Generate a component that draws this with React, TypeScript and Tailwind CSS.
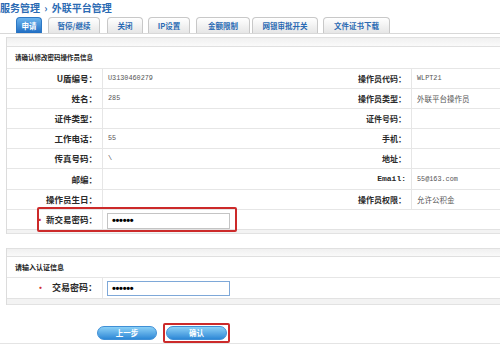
const tabs = [
  { label: '申请', cls: 'ml-[16px] w-[26px]', active: true },
  { label: '暂停/继续', cls: 'ml-[6px] w-[52px]' },
  { label: '关闭', cls: 'ml-[7px] w-[36px]' },
  { label: 'IP设置', cls: 'ml-[5px] w-[42px]' },
  { label: '金额限制', cls: 'ml-[6px] w-[54px]' },
  { label: '网银审批开关', cls: 'ml-[2px] w-[66px]' },
  { label: '文件证书下载', cls: 'ml-[5px] w-[67px]' },
];

const rows = [
  { l1: 'U盾编号：', v1: 'U3130460279', l2: '操作员代码：', v2: 'WLPT21' },
  { l1: '姓名：', v1: '285', l2: '操作员类型：', v2: '外联平台操作员', cjk2: true },
  { l1: '证件类型：', v1: '', l2: '证件号码：', v2: '' },
  { l1: '工作电话：', v1: '55', l2: '手机：', v2: '' },
  { l1: '传真号码：', v1: '\\', l2: '地址：', v2: '' },
  { l1: '邮编：', v1: '', l2: 'Email:', v2: '55@163.com', mono2: true },
  { l1: '操作员生日：', v1: '', l2: '操作员权限：', v2: '允许公积金', cjk2: true },
];

const cjk = { fontFamily: '"Noto Sans CJK SC", "Liberation Sans", sans-serif' };
const mono = { fontFamily: '"Liberation Mono", "Noto Sans CJK SC", monospace' };

function Label({ text, mono: m, big }: { text: string; mono?: boolean; big?: boolean }) {
  return (
    <div
      className={`h-full flex items-center justify-end pr-[5px] font-bold text-[#2a2a2a] whitespace-nowrap ${big ? 'text-[8.5px]' : 'text-[8px]'}`}
      style={m ? mono : cjk}
    >
      {text}
    </div>
  );
}

function Value({ text, cjkText }: { text: string; cjkText?: boolean }) {
  return (
    <div
      className={`h-full flex items-center pl-[5px] text-[#555] ${cjkText ? 'text-[7.5px]' : 'text-[6.8px]'}`}
      style={cjkText ? cjk : mono}
    >
      {text}
    </div>
  );
}

function Dots() {
  return <span className="text-[11px] font-bold text-black tracking-[-0.3px] leading-none" style={{ fontFamily: '"Liberation Sans", sans-serif' }}>••••••</span>;
}

export default function App() {
  return (
    <div className="relative w-[500px] h-[347px] overflow-hidden bg-white" style={cjk}>
      {/* breadcrumb */}
      <div className="h-[16px] pt-[2px] text-[10px] leading-[12px] font-bold text-[#2a6ab3] whitespace-nowrap">
        服务管理 <span className="mx-[2px]">›</span> 外联平台管理
      </div>

      {/* tabs */}
      <div className="flex items-end h-[17px] mt-[1px] border-b border-[#d8d8d8]">
        {tabs.map(t => (
          <div
            key={t.label}
            className={`${t.cls} h-[16px] flex items-center justify-center rounded-t-[4px] border border-b-0 text-[7.5px] font-bold whitespace-nowrap ${
              t.active
                ? 'border-[#2d78c4] bg-gradient-to-b from-[#6ab4ee] to-[#1f6dc2] text-white'
                : 'border-[#c8c8c8] bg-gradient-to-b from-white to-[#e6e6e6] text-[#2a6ab3]'
            }`}
          >
            {t.label}
          </div>
        ))}
      </div>

      {/* box 1 */}
      <div className="ml-[6px] mt-[3px] border-l border-[#dcdcdc]">
        <div className="h-[10px] border-y border-[#e0e0e0] bg-gradient-to-b from-[#f0f0f0] to-[#fafafa]" />
        <div className="h-[21px] flex items-center pl-[8px] text-[6.5px] font-bold text-[#222]">请确认修改密码操作员信息</div>
        {rows.map((r, i) => (
          <div key={i} className={`grid grid-cols-[96px_210px_99px_1fr] border-t border-[#e6e6e6] ${i === 5 ? 'h-[21px]' : 'h-[20px]'}`}>
            <div className="border-r border-[#e6e6e6]"><Label text={r.l1} big /></div>
            <Value text={r.v1} />
            <div className="border-r border-[#e6e6e6]"><Label text={r.l2} mono={r.mono2} /></div>
            <Value text={r.v2} cjkText={r.cjk2} />
          </div>
        ))}
        <div className="relative grid grid-cols-[96px_1fr] h-[20px] border-t border-[#e6e6e6]">
          <div className="border-r border-[#e6e6e6] h-full flex items-center justify-end pr-[5px] text-[8.5px] font-bold text-[#2a2a2a]">
            <span className="text-[#d03030] mr-[2px]">•</span>新交易密码：
          </div>
          <div className="flex items-center pl-[4px]">
            <div className="w-[123px] h-[16px] mt-[2px] border border-[#c4c4c4] bg-white flex items-center pl-[4px]">
              <Dots />
            </div>
          </div>
          <div className="absolute left-[30px] top-[-3px] w-[200px] h-[25px] border-2 border-[#cc2a2a] rounded-[2px]" />
        </div>
        <div className="h-[5px] border-y border-[#e2e2e2] bg-[#f3f3f3]" />
      </div>

      {/* box 2 */}
      <div className="ml-[6px] mt-[14px] border-l border-[#dcdcdc]">
        <div className="h-[9px] border-y border-[#e0e0e0] bg-gradient-to-b from-[#f0f0f0] to-[#fafafa]" />
        <div className="h-[20px] flex items-center pl-[8px] text-[7px] font-bold text-[#222]">请输入认证信息</div>
        <div className="grid grid-cols-[96px_1fr] h-[21px] border-t border-[#e6e6e6]">
          <div className="border-r border-[#e6e6e6] h-full flex items-center justify-end pr-[5px] text-[9px] font-bold text-[#2a2a2a]">
            <span className="text-[#d03030] mr-[7px]">•</span>交易密码：
          </div>
          <div className="flex items-center pl-[4px]">
            <div className="w-[123px] h-[15px] border border-[#7ea8d8] bg-white flex items-center pl-[4px]">
              <Dots />
            </div>
          </div>
        </div>
        <div className="h-[7px] border-y border-[#e2e2e2] bg-[#f3f3f3]" />
      </div>

      {/* buttons */}
      <div className="flex items-center ml-[97px] mt-[18px] h-[20px]">
        <button className="w-[60px] h-[14px] rounded-full border border-[#3f8fd6] bg-gradient-to-b from-[#8ad0f6] to-[#2c88d6] text-white text-[7.5px] font-bold">
          上一步
        </button>
        <div className="ml-[6px] border-2 border-[#cc2a2a] rounded-[2px] px-[1px] py-[1px]">
          <button className="block w-[61px] h-[14px] rounded-full border border-[#3f8fd6] bg-gradient-to-b from-[#8ad0f6] to-[#2c88d6] text-white text-[7.5px] font-bold">
            确认
          </button>
        </div>
      </div>
      <div className="h-[1px] bg-[#e4e4e4]" />
    </div>
  );
}
